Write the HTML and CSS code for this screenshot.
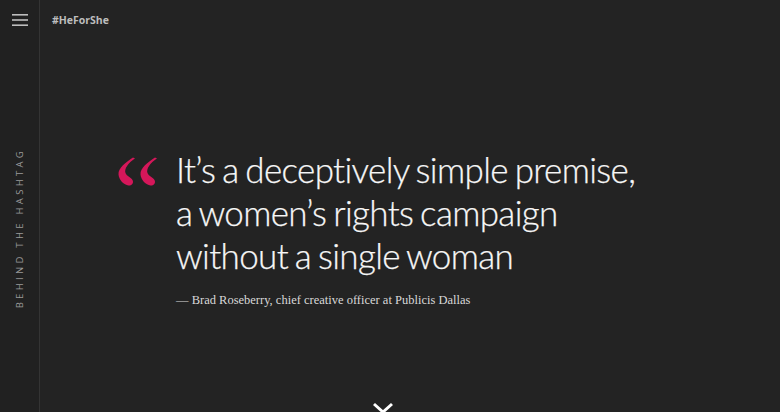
FILE: index.html
```html
<!DOCTYPE html>
<html lang="en">
<head>
<meta charset="utf-8">
<title>#HeForShe</title>
<link rel="stylesheet" href="styles.css">
</head>
<body>
<div class="page">
  <aside class="sidebar">
    <button class="menu" aria-label="Menu">
      <svg width="16" height="12" viewBox="0 0 16 12"><rect x="0" y="0" width="16" height="1.6" fill="#bdbdbd"/><rect x="0" y="5.2" width="16" height="1.6" fill="#bdbdbd"/><rect x="0" y="10.4" width="16" height="1.6" fill="#bdbdbd"/></svg>
    </button>
    <div class="side-label"><span>BEHIND THE HASHTAG</span></div>
  </aside>
  <main class="main">
    <header class="top"><span class="tag">#HeForShe</span></header>
    <section class="quote">
      <svg class="qmark" width="42" height="29" viewBox="0 0 42 29">
        <path d="M16,0.5 C9,5 1,11 1.5,17.5 C2,23 7,28 11.5,28.5 C15,28.8 17,26 15.5,23 C14,20 10,19.5 8.5,16 C7,12 11,6 18,1.5 Z" fill="#d5175a"/>
        <path d="M38,0.5 C31,5 23,11 23.5,17.5 C24,23 29,28 33.5,28.5 C37,28.8 39,26 37.5,23 C36,20 32,19.5 30.5,16 C29,12 33,6 40,1.5 Z" fill="#d5175a"/>
      </svg>
      <div class="qbody">
        <blockquote class="qtext">It’s a deceptively simple premise,<br>a women’s rights campaign<br>without a single woman</blockquote>
        <p class="cite">— Brad Roseberry, chief creative officer at Publicis Dallas</p>
      </div>
    </section>
    <div class="down">
      <svg width="22" height="12" viewBox="0 0 22 12"><path d="M2,2 L11,10 L20,2" fill="none" stroke="#ffffff" stroke-width="3"/></svg>
    </div>
  </main>
</div>
</body>
</html>
```
FILE: styles.css
```css
html, body {
  margin: 0;
  padding: 0;
  background: #232323;
  height: 100%;
  overflow: hidden;
}
.page {
  display: flex;
  height: 412px;
}
.sidebar {
  width: 39px;
  flex: none;
  border-right: 1px solid #343434;
  background: #212121;
  display: flex;
  flex-direction: column;
  align-items: center;
}
.menu {
  background: none;
  border: 0;
  padding: 0;
  margin-top: 14px;
  width: 16px;
  height: 12px;
  display: block;
}
.menu svg { display: block; }
.side-label {
  flex: 1;
  display: flex;
  align-items: center;
  justify-content: center;
  padding-top: 18px;
}
.side-label span {
  writing-mode: vertical-rl;
  transform: rotate(180deg);
  font-family: "Open Sans", sans-serif;
  font-size: 9.5px;
  letter-spacing: 3.3px;
  color: #9a9a9a;
  white-space: nowrap;
}
.main {
  flex: 1;
  display: flex;
  flex-direction: column;
  position: relative;
}
.top {
  height: 40px;
  padding-left: 12px;
  display: flex;
  align-items: center;
}
.tag {
  font-family: "Open Sans", sans-serif;
  font-weight: 700;
  font-size: 10.5px;
  color: #bdbdbd;
  margin-top: -1px;
}
.quote {
  display: flex;
  padding-left: 77px;
  padding-top: 108px;
  gap: 17px;
}
.qmark {
  flex: none;
  margin-top: 9px;
}
.qbody { display: flex; flex-direction: column; }
.qtext {
  margin: 0;
  font-family: Lato, sans-serif;
  font-weight: 300;
  font-size: 35px;
  line-height: 43px;
  color: #f7f7f7;
  letter-spacing: -0.65px;
  word-spacing: -2px;
  -webkit-text-stroke: 0.25px #f7f7f7;
}
.cite {
  margin: 16px 0 0;
  font-family: "Liberation Serif", serif;
  font-size: 12.5px;
  color: #d8d8d8;
}
.down {
  position: absolute;
  left: 332px;
  top: 402px;
}
.down svg { display: block; }
```
